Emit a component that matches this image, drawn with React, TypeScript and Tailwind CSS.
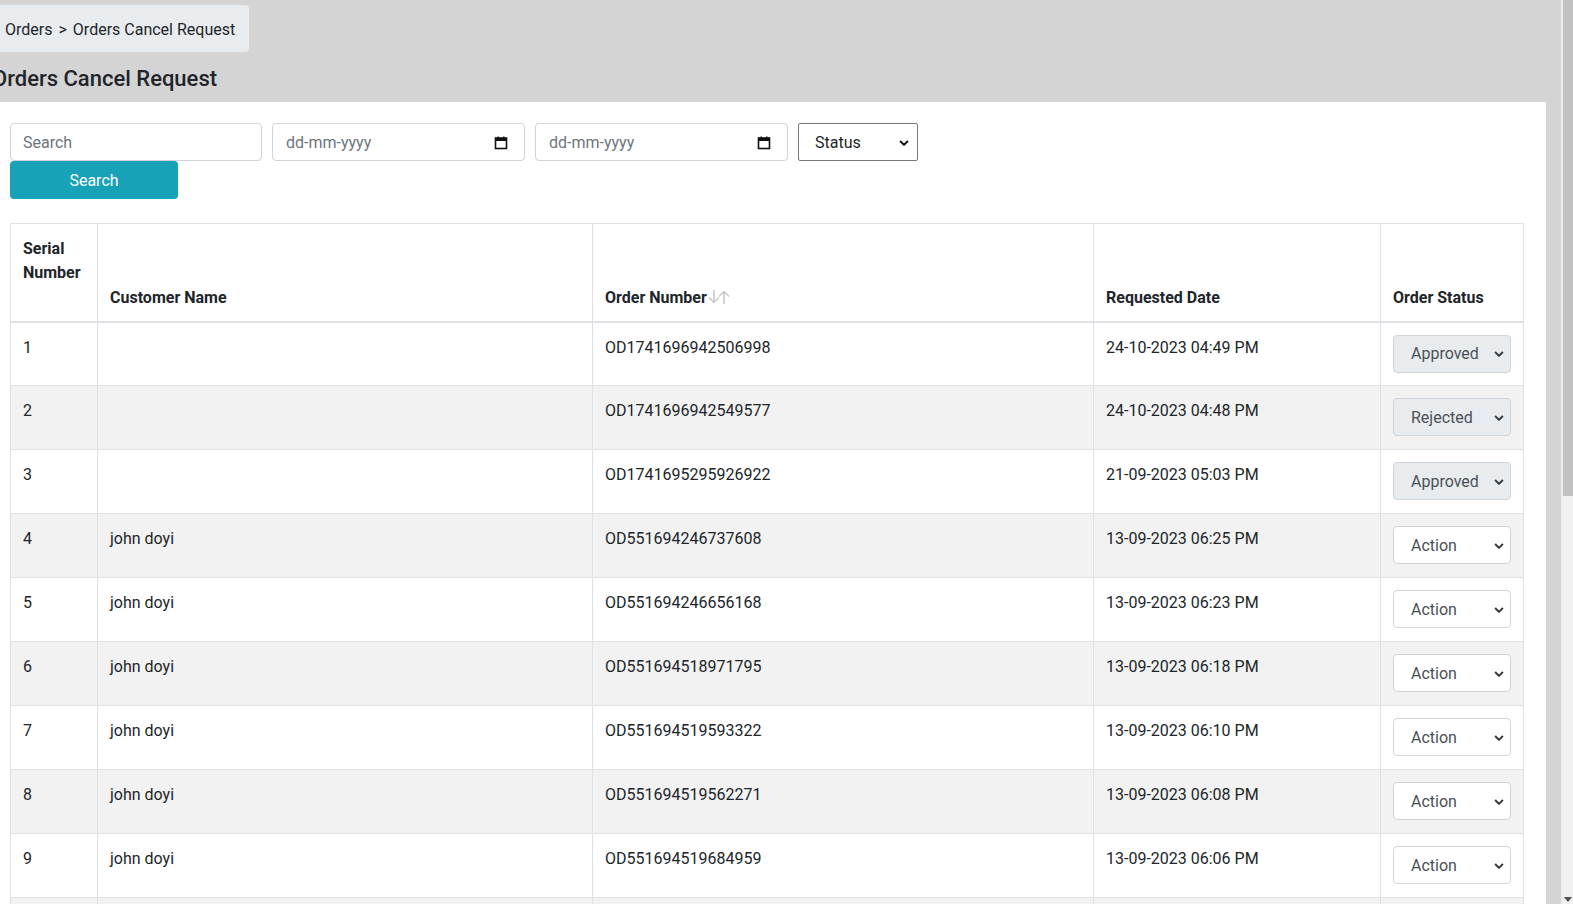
import React from 'react'

type Row = {
  serial: number
  name: string
  order: string
  date: string
  status: 'Approved' | 'Rejected' | 'Action'
}

const rows: Row[] = [
  { serial: 1, name: '', order: 'OD1741696942506998', date: '24-10-2023 04:49 PM', status: 'Approved' },
  { serial: 2, name: '', order: 'OD1741696942549577', date: '24-10-2023 04:48 PM', status: 'Rejected' },
  { serial: 3, name: '', order: 'OD1741695295926922', date: '21-09-2023 05:03 PM', status: 'Approved' },
  { serial: 4, name: 'john doyi', order: 'OD551694246737608', date: '13-09-2023 06:25 PM', status: 'Action' },
  { serial: 5, name: 'john doyi', order: 'OD551694246656168', date: '13-09-2023 06:23 PM', status: 'Action' },
  { serial: 6, name: 'john doyi', order: 'OD551694518971795', date: '13-09-2023 06:18 PM', status: 'Action' },
  { serial: 7, name: 'john doyi', order: 'OD551694519593322', date: '13-09-2023 06:10 PM', status: 'Action' },
  { serial: 8, name: 'john doyi', order: 'OD551694519562271', date: '13-09-2023 06:08 PM', status: 'Action' },
  { serial: 9, name: 'john doyi', order: 'OD551694519684959', date: '13-09-2023 06:06 PM', status: 'Action' },
  { serial: 10, name: 'john doyi', order: 'OD551694519600000', date: '13-09-2023 06:01 PM', status: 'Action' },
]

const Chevron = ({ className }: { className?: string }) => (
  <svg viewBox="0 0 16 16" className={className} fill="none" stroke="currentColor" strokeWidth="2.6" strokeLinecap="round" strokeLinejoin="round">
    <path d="M3.5 6l4.5 4.5L12.5 6" />
  </svg>
)

const CalendarIcon = () => (
  <svg viewBox="0 0 14 14" className="w-[14px] h-[14px]" fill="none">
    <rect x="1.5" y="2" width="11" height="10.5" stroke="#111" strokeWidth="1.6" />
    <rect x="1.5" y="2" width="11" height="3" fill="#111" />
    <rect x="3.5" y="0.5" width="1.4" height="2" fill="#111" />
    <rect x="9.1" y="0.5" width="1.4" height="2" fill="#111" />
  </svg>
)

const SortArrows = () => (
  <svg viewBox="0 0 24 16" className="w-[24px] h-[16px] inline-block align-[-2px]" fill="none" stroke="#c9c9c9" strokeWidth="1.6" strokeLinecap="round" strokeLinejoin="round">
    <path d="M7 1.5v12M2.5 9l4.5 4.5L11.5 9" />
    <path d="M17 14.5v-12M12.5 7l4.5-4.5L21.5 7" />
  </svg>
)

const DateField = () => (
  <div className="w-[253px] h-[38px] border border-[#ced4da] rounded-[4px] bg-white flex items-center justify-between pl-[13px] pr-[16px] pt-[1px]">
    <span className="text-[#6c757d]">dd-mm-yyyy</span>
    <CalendarIcon />
  </div>
)

const StatusSelect = ({ status }: { status: Row['status'] }) => {
  const disabled = status !== 'Action'
  return (
    <div
      className={
        disabled
          ? 'w-[118px] h-[38px] border border-[#ced4da] rounded-[4px] bg-[#e9ecef] flex items-center justify-between pl-[17px] pr-[5px] pt-[1px] text-[#495057]'
          : 'w-[118px] h-[38px] border border-[#ced4da] rounded-[4px] bg-white flex items-center justify-between pl-[17px] pr-[5px] pt-[1px] text-[#495057]'
      }
    >
      <span>{status}</span>
      <Chevron className="w-[12px] h-[12px] text-[#343a40]" />
    </div>
  )
}

const App = () => {
  return (
    <div className="h-[904px] w-full overflow-hidden flex bg-[#d4d4d4] text-[#212529] text-[16px] leading-[24px] font-['Roboto','Lato',sans-serif]">
      <div className="flex-1 min-w-0 flex flex-col">
        <div className="pt-[5px]">
          <div className="inline-flex items-center h-[47px] bg-[#e9ecef] rounded-r-[4px] pl-[5px] pr-[14px] pt-[2px]">
            <span>Orders</span>
            <span className="px-[6px]">&gt;</span>
            <span>Orders Cancel Request</span>
          </div>
        </div>
        <h4 className="-ml-[8px] mt-[13px] mb-[10px] text-[22px] leading-[27px] font-medium">Orders Cancel Request</h4>

        <div className="flex-1 w-[1546px] bg-white pl-[10px] pt-[21px]">
          <div className="flex gap-[10px]">
            <div className="w-[252px] h-[38px] border border-[#ced4da] rounded-[4px] bg-white flex items-center pl-[12px] pt-[1px] text-[#6c757d]">
              Search
            </div>
            <DateField />
            <DateField />
            <div className="w-[120px] h-[38px] border border-[#767676] rounded-[2px] bg-white flex items-center justify-between pl-[16px] pr-[7px] pt-[1px]">
              <span>Status</span>
              <Chevron className="w-[12px] h-[12px] text-[#111]" />
            </div>
          </div>
          <button className="mt-0 w-[168px] h-[38px] bg-[#17a2b8] text-white rounded-[4px] pt-[1px]">Search</button>

          <table className="mt-[24px] w-[1513px] border-collapse border border-[#dee2e6] table-fixed">
            <colgroup>
              <col className="w-[87px]" />
              <col className="w-[495px]" />
              <col className="w-[501px]" />
              <col className="w-[287px]" />
              <col className="w-[143px]" />
            </colgroup>
            <thead>
              <tr className="h-[98px]">
                <th className="border border-[#dee2e6] border-b-2 px-[12px] pt-[12px] pb-[36px] text-left align-bottom font-bold leading-[24px]">
                  Serial Number
                </th>
                <th className="border border-[#dee2e6] border-b-2 px-[12px] pt-[12px] pb-[11px] text-left align-bottom font-bold">Customer Name</th>
                <th className="border border-[#dee2e6] border-b-2 px-[12px] pt-[12px] pb-[11px] text-left align-bottom font-bold">
                  Order Number
                  <SortArrows />
                </th>
                <th className="border border-[#dee2e6] border-b-2 px-[12px] pt-[12px] pb-[11px] text-left align-bottom font-bold">Requested Date</th>
                <th className="border border-[#dee2e6] border-b-2 px-[12px] pt-[12px] pb-[11px] text-left align-bottom font-bold">Order Status</th>
              </tr>
            </thead>
            <tbody>
              {rows.map((r) => (
                <tr key={r.serial} className={r.serial % 2 === 0 ? 'h-[64px] bg-[#f2f2f2]' : 'h-[64px] bg-white'}>
                  <td className="border border-[#dee2e6] px-[12px] pt-[13px] pb-[11px] align-top">{r.serial}</td>
                  <td className="border border-[#dee2e6] px-[12px] pt-[13px] pb-[11px] align-top">{r.name}</td>
                  <td className="border border-[#dee2e6] px-[12px] pt-[13px] pb-[11px] align-top">{r.order}</td>
                  <td className="border border-[#dee2e6] px-[12px] pt-[13px] pb-[11px] align-top">{r.date}</td>
                  <td className="border border-[#dee2e6] px-[12px] pt-[12px] pb-[12px] align-top">
                    <StatusSelect status={r.status} />
                  </td>
                </tr>
              ))}
            </tbody>
          </table>
        </div>
      </div>

      {/* fake scrollbar */}
      <div className="w-[12px] flex flex-col border-l-2 border-[#ececec]">
        <div className="h-[496px] bg-[#c1c1c1]" />
        <div className="flex-1 bg-[#f1f1f1] flex items-end justify-center pb-[2px]">
          <svg viewBox="0 0 8 5" className="w-[8px] h-[5px]">
            <path d="M0 0h8L4 5z" fill="#505050" />
          </svg>
        </div>
      </div>
    </div>
  )
}

export default App
